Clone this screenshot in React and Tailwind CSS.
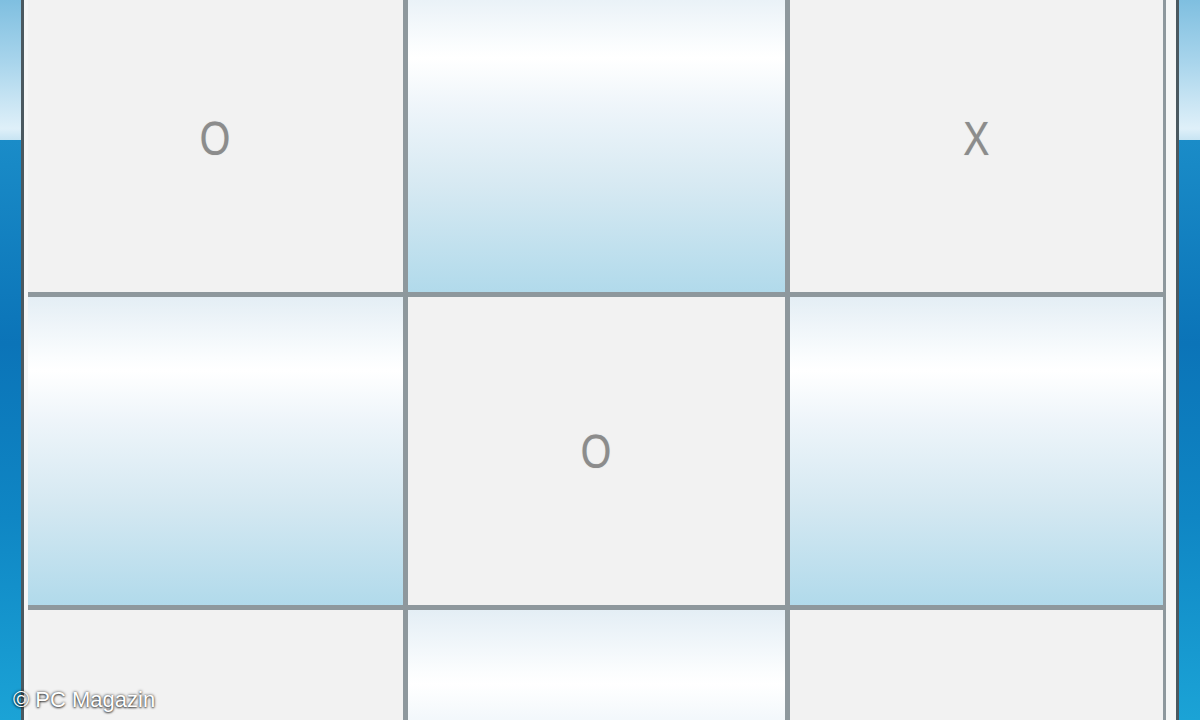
import React from 'react';

// each square: what is written in it and whether it shows the blue glass face
const board = [
  { v: 'O', blue: false }, { v: '', blue: true }, { v: 'X', blue: false },
  { v: '', blue: true }, { v: 'O', blue: false }, { v: '', blue: true },
  { v: '', blue: false }, { v: '', blue: true }, { v: '', blue: false },
];

const Strip = ({ side }) => (
  <div className={`flex h-full ${side === 'right' ? 'flex-row-reverse' : ''}`}>
    <div className="flex h-full w-[21px] flex-col">
      <div className="h-[140px] bg-[linear-gradient(to_bottom,#7fbfe0_0%,#a9d5ec_45%,#dff0f9_92%,#c7e4f3_100%)]" />
      <div className="flex-1 bg-[linear-gradient(to_bottom,#1a8cc8_0%,#0b74b8_35%,#0f86c4_65%,#1ba3d6_100%)]" />
    </div>
    <div className="h-full w-[3px] bg-[#4b5960]" />
  </div>
);

const Cell = ({ v, blue }) => (
  <div
    className={`flex items-center justify-center ${
      blue
        ? 'bg-[linear-gradient(to_bottom,#e4eef5_0%,#fbfdfe_20%,#ffffff_24%,#eef5fa_40%,#d6e9f2_66%,#b1daeb_100%)]'
        : 'bg-[#f2f2f2]'
    }`}
  >
    {v && (
      <span className="inline-block scale-x-[0.8] text-[49px] leading-none text-[#8c8c8c] [font-family:'Liberation_Sans',Arial,sans-serif] [text-shadow:0_0_1px_rgba(140,140,140,0.6)]">
        {v}
      </span>
    )}
  </div>
);

export default function App() {
  return (
    <div className="relative flex h-[720px] w-[1200px] overflow-hidden bg-[#f4f4f4]">
      <Strip side="left" />
      <div className="flex h-full flex-1 bg-[#f5f6f6] pl-[4px] pr-[9px]">
        <div className="-mt-[16px] grid h-fit grid-cols-[375px_377px_373px] grid-rows-[308px_308px_308px] gap-[5px] bg-[#8e989d] pr-[3px]">
          {board.map((c, i) => (
            <Cell key={i} v={c.v} blue={c.blue} />
          ))}
        </div>
      </div>
      <Strip side="right" />

      {/* watermark */}
      <div className="absolute bottom-[9px] left-[13px] text-[22px] leading-none text-white [font-family:'Liberation_Sans',Arial,sans-serif] [text-shadow:0_0_3px_rgba(0,0,0,0.8),0_1px_2px_rgba(0,0,0,0.6)]">
        © PC Magazin
      </div>
    </div>
  );
}
